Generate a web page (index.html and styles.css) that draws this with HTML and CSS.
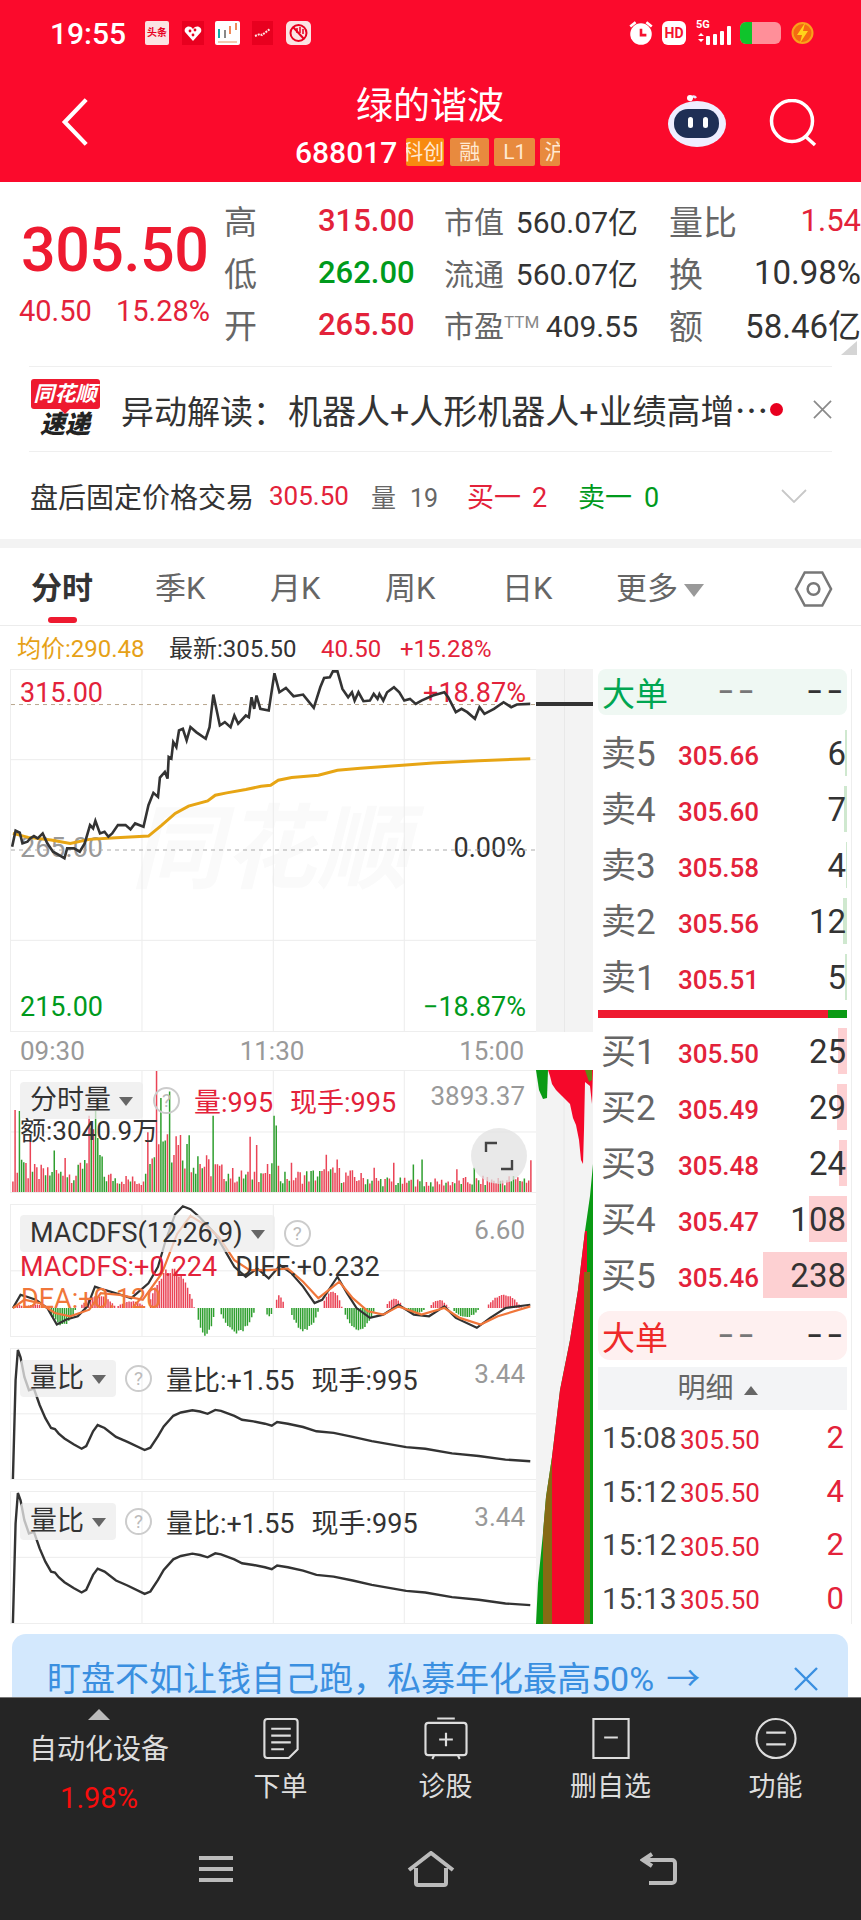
FILE: index.html
```html
<!DOCTYPE html>
<html lang="zh-CN">
<head>
    <meta charset="UTF-8">
    <meta name="viewport" content="width=device-width, initial-scale=1.0">
    <title>绿的谐波</title>
    <link rel="stylesheet" href="styles.css">
</head>
<body>
    <header class="topbar">
        <div class="status">
            <div class="status-left">
                <span class="clock">19:55</span>
                <span class="app app-news">头条</span>
                <svg class="app app-heart" viewBox="0 0 22 24"><rect width="22" height="24" fill="#e8001f"/><path d="M11 20 3 11C1 6 8 3 11 8c3-5 10-2 8 3z" fill="#fff"/><circle cx="8" cy="10" r="1.4" fill="#e8001f"/><circle cx="13" cy="9" r="1.4" fill="#e8001f"/><circle cx="11" cy="14" r="1.4" fill="#e8001f"/></svg>
                <svg class="app app-candle" viewBox="0 0 25 24"><rect width="25" height="24" rx="2" fill="#fff"/><rect x="3" y="8" width="2" height="9" fill="#13a8a8"/><rect x="9" y="9" width="2" height="8" fill="#888"/><rect x="14" y="5" width="2" height="8" fill="#f08a5a"/><rect x="20" y="2" width="2" height="7" fill="#f08a5a"/><rect x="3" y="20" width="19" height="2" fill="#f3c9b0"/></svg>
                <svg class="app app-trend" viewBox="0 0 21 24"><rect width="21" height="24" fill="#e8001f"/><path d="M3 15 8 13l2 1 4-3 4-3" fill="none" stroke="#ffe2e2" stroke-width="2" stroke-dasharray="2 1"/></svg>
                <svg class="app app-hand" viewBox="0 0 25 24"><rect width="25" height="24" rx="5" fill="#fbe3e3"/><circle cx="12.5" cy="12" r="8" fill="none" stroke="#e8001f" stroke-width="2"/><path d="M7 6l11 12" stroke="#e8001f" stroke-width="2"/><path d="M11 7v5M14 6v6M17 8v5" stroke="#e8001f" stroke-width="1.5"/></svg>
            </div>
            <div class="status-right">
                <svg class="ico-alarm" viewBox="0 0 26 24"><circle cx="13" cy="13" r="10" fill="#fff"/><path d="M3 6l5-4M23 6l-5-4" stroke="#fff" stroke-width="2.4" fill="none"/><path d="M13 8v6h5" stroke="#f5112f" stroke-width="2.4" fill="none"/></svg>
                <span class="ico-hd">HD</span>
                <div class="signal">
                    <span class="signal-5g">5G</span>
                    <svg viewBox="0 0 37 24"><path d="M3 15l3-3 3 3zM3 18l3 3 3-3z" fill="#fff"/><rect x="11" y="15" width="4" height="9" rx="1" fill="#fff"/><rect x="18" y="13" width="4" height="11" rx="1" fill="#fff"/><rect x="25" y="10" width="4" height="14" rx="1" fill="#fff"/><rect x="32" y="5" width="4" height="19" rx="1" fill="#fff"/></svg>
                </div>
                <div class="battery"><span class="battery-fill"></span></div>
                <svg class="ico-bolt" viewBox="0 0 25 26"><circle cx="12.5" cy="13" r="10" fill="#f46a12" stroke="#f9a11b" stroke-width="2"/><path d="M15 3 7 15h5l-2 8 8-12h-5z" fill="#ffd31a"/></svg>
            </div>
        </div>
        <div class="nav">
            <svg class="nav-back" viewBox="0 0 30 52"><polyline points="27,2 4,26 27,50" fill="none" stroke="#fff" stroke-width="4.5"/></svg>
            <div class="nav-title">
                <h1>绿的谐波</h1>
                <div class="nav-code">
                    <span class="code">688017</span>
                    <span class="tag tag-kc"><span>科创</span></span>
                    <span class="tag">融</span>
                    <span class="tag">L1</span>
                    <span class="tag tag-cut"><span>沪</span></span>
                </div>
            </div>
            <div class="nav-tools">
                <svg class="robot" viewBox="0 0 60 54"><path d="M24 7c-2-4 3-6 5-3" fill="none" stroke="#e9e7ff" stroke-width="2.5"/><circle cx="23" cy="4" r="3" fill="#fff"/><ellipse cx="30" cy="30" rx="29" ry="23" fill="#efeeff"/><rect x="7" y="15" width="45" height="29" rx="14" fill="#1f2f55"/><rect x="21" y="23" width="5" height="11" rx="2.5" fill="#fff"/><rect x="36" y="23" width="5" height="11" rx="2.5" fill="#fff"/></svg>
                <svg class="search" viewBox="0 0 48 48"><circle cx="23" cy="22" r="20.5" fill="none" stroke="#fff" stroke-width="3.5"/><path d="M36 37l10 9" stroke="#fff" stroke-width="3.5"/></svg>
            </div>
        </div>
    </header>

    <section class="quote">
        <div class="quote-main">
            <div class="price">305.50</div>
            <div class="price-sub"><span>40.50</span><span>15.28%</span></div>
        </div>
        <div class="quote-grid">
            <span class="qk">高</span><span class="qv red">315.00</span>
            <span class="qm"><em>市值</em><b>560.07亿</b></span>
            <span class="qk qk2">量比</span><span class="qr qr-small red">1.54</span>

            <span class="qk">低</span><span class="qv green">262.00</span>
            <span class="qm"><em>流通</em><b>560.07亿</b></span>
            <span class="qk qk2">换</span><span class="qr">10.98%</span>

            <span class="qk">开</span><span class="qv red">265.50</span>
            <span class="qm"><em>市盈<small>TTM</small></em><b>409.55</b></span>
            <span class="qk qk2">额</span><span class="qr">58.46亿</span>
        </div>
        <span class="corner"></span>
    </section>

    <section class="notice">
        <div class="logo">
            <span class="logo-top">同花顺</span>
            <span class="logo-bottom">速递</span>
        </div>
        <p class="notice-text">异动解读：<span class="notice-gap">机器人+人形机器人+业绩高增<span class="dots">…</span></span></p>
        <span class="notice-dot"></span>
        <svg class="notice-close" viewBox="0 0 20 20"><path d="M1 1l18 18M19 1 1 19" stroke="#8a8a8a" stroke-width="1.8"/></svg>
    </section>

    <section class="aftermarket">
        <span class="am-title">盘后固定价格交易</span>
        <span class="am-price red">305.50</span>
        <span class="am-vol">量<i>19</i></span>
        <span class="am-buy red">买一<i>2</i></span>
        <span class="am-sell green">卖一<i>0</i></span>
        <svg class="am-arrow" viewBox="0 0 26 14"><polyline points="1,1 13,13 25,1" fill="none" stroke="#c8c8c8" stroke-width="1.8"/></svg>
    </section>

    <nav class="tabs">
        <span class="tab tab-active">分时</span>
        <span class="tab">季K</span>
        <span class="tab">月K</span>
        <span class="tab">周K</span>
        <span class="tab">日K</span>
        <span class="tab">更多<i class="tri tri-tab"></i></span>
        <svg class="tab-hex" viewBox="0 0 40 38"><path d="M11 2h18l9 17-9 17H11L2 19z" fill="none" stroke="#777" stroke-width="2.6"/><circle cx="20" cy="19" r="6" fill="none" stroke="#777" stroke-width="2.6"/></svg>
    </nav>

    <div class="legend">
        <span class="legend-avg">均价:290.48</span>
        <span class="legend-last">最新:305.50</span>
        <span class="red legend-chg">40.50</span>
        <span class="red">+15.28%</span>
    </div>

    <main class="main">
        <div class="charts">
            <div class="price-row">
                <div class="panel panel-price">
                    <span class="watermark">同花顺</span>
                    <span class="pl pl-top red">315.00</span>
                    <span class="pl pl-top pl-right red">+18.87%</span>
                    <span class="pl pl-mid gray">265.00</span>
                    <span class="pl pl-mid pl-right dark">0.00%</span>
                    <span class="pl pl-bot green">215.00</span>
                    <span class="pl pl-bot pl-right green">−18.87%</span>
                    <svg class="plot" viewBox="25 358 1375 1087" preserveAspectRatio="none">
                        <path class="grid" d="M368 358V1445M712 358V1445M1055 358V1445M25 628H1400M25 1172H1400"/>
                        <path class="grid-dash" d="M25 462H1400"/>
                        <path class="grid-dash2" d="M25 900H1400"/>
                        <path id="avgLine" class="line-avg"/>
                        <path id="priceLine" class="line-price"/>
                    </svg>
                </div>
                <div class="stripe"><span class="stripe-tick"></span></div>
            </div>
            <div class="times"><span>09:30</span><span>11:30</span><span>15:00</span></div>
            <div class="lower">
                <div class="panels">
                    <div class="panel panel-vol">
                        <svg class="plot" viewBox="25 30 1375 373" preserveAspectRatio="none">
                            <path class="grid" d="M368 30V403M712 30V403M1055 30V403M25 218H1400"/>
                            <path id="volRed" class="bar-red"/>
                            <path id="volGreen" class="bar-green"/>
                        </svg>
                        <div class="head">
                            <span class="chip">分时量<i class="tri"></i></span>
                            <span class="help">?</span>
                            <span class="red vals">量:995</span>
                            <span class="red vals">现手:995</span>
                        </div>
                        <span class="amount">额:3040.9万</span>
                        <span class="maxval">3893.37</span>
                        <span class="expand">
                            <svg viewBox="0 0 30 30"><path d="M2 11V2h11M28 19v9H17" fill="none" stroke="#444" stroke-width="2.4"/></svg>
                        </span>
                    </div>
                    <div class="panel panel-macd">
                        <svg class="plot" viewBox="25 432 1375 398" preserveAspectRatio="none">
                            <path class="grid" d="M368 432V830M712 432V830M1055 432V830M25 632H1400"/>
                            <path id="macdRed" class="bar-red"/>
                            <path id="macdGreen" class="bar-green"/>
                            <path id="macdDif" class="line-dif"/>
                            <path id="macdDea" class="line-dea"/>
                        </svg>
                        <div class="head">
                            <span class="chip">MACDFS(12,26,9)<i class="tri"></i></span>
                            <span class="help">?</span>
                        </div>
                        <span class="maxval">6.60</span>
                        <div class="macd-vals">
                            <span class="red">MACDFS:+0.224</span>
                            <span class="dark">DIFF:+0.232</span>
                        </div>
                        <span class="macd-dea">DEA:+0.120</span>
                    </div>
                    <div class="panel panel-ratio">
                        <svg class="plot" viewBox="25 55 1375 395" preserveAspectRatio="none">
                            <path class="grid" d="M368 55V450M712 55V450M1055 55V450M25 252H1400"/>
                            <path class="line-ratio ratioLine"/>
                        </svg>
                        <div class="head">
                            <span class="chip">量比<i class="tri"></i></span>
                            <span class="help">?</span>
                            <span class="dark vals">量比:+1.55</span>
                            <span class="dark vals">现手:995</span>
                        </div>
                        <span class="maxval">3.44</span>
                    </div>
                    <div class="panel panel-ratio">
                        <svg class="plot" viewBox="25 55 1375 395" preserveAspectRatio="none">
                            <path class="grid" d="M368 55V450M712 55V450M1055 55V450M25 252H1400"/>
                            <path class="line-ratio ratioLine"/>
                        </svg>
                        <div class="head">
                            <span class="chip">量比<i class="tri"></i></span>
                            <span class="help">?</span>
                            <span class="dark vals">量比:+1.55</span>
                            <span class="dark vals">现手:995</span>
                        </div>
                        <span class="maxval">3.44</span>
                    </div>
                </div>
                <svg class="flow" viewBox="536 1070 57 554" preserveAspectRatio="none">
                    <path d="M564 1070V1624" stroke="#e8e8e8" stroke-width="1" fill="none"/>
                    <path d="M536 1070H548L547 1098 543 1099 539 1090z" fill="#0a9a14"/>
                    <path d="M548 1070H593L592 1104 590 1086 585 1082 584 1130 583 1164 581 1160 579 1140 576 1125 573 1118 570 1104 566 1100 562 1096 556 1090 552 1084 550 1076z" fill="#f5082a"/>
                    <path d="M585 1070H592V1080L589 1082 587 1076z" fill="#5f8a14"/>
                    <path d="M593 1164V1624H536L538 1583 543 1533 546 1497 552 1457 560 1390 570 1340 578 1290 582 1256 585 1231 590 1196z" fill="#0a9a14"/>
                    <path d="M587 1231V1624H552V1457L560 1390 570 1340 578 1290 582 1256 585 1231z" fill="#f5082a"/>
                    <path d="M584 1272V1624H590V1272z" fill="#866a14"/>
                    <path d="M552 1457V1624H543V1533L546 1497z" fill="#866a14"/>
                </svg>
            </div>
        </div>

        <aside class="book">
            <div class="big big-sell"><span class="big-name">大单</span><span class="dash dash-gray">−−</span><span class="dash">−−</span></div>
            <div class="rows">
                <div class="row"><span class="depth depth-sell" style="width: 2px"></span><span class="rk">卖5</span><span class="rp">305.66</span><span class="rq">6</span></div>
                <div class="row"><span class="depth depth-sell" style="width: 3px"></span><span class="rk">卖4</span><span class="rp">305.60</span><span class="rq">7</span></div>
                <div class="row"><span class="depth depth-sell" style="width: 1px"></span><span class="rk">卖3</span><span class="rp">305.58</span><span class="rq">4</span></div>
                <div class="row"><span class="depth depth-sell" style="width: 4px"></span><span class="rk">卖2</span><span class="rp">305.56</span><span class="rq">12</span></div>
                <div class="row"><span class="depth depth-sell" style="width: 2px"></span><span class="rk">卖1</span><span class="rp">305.51</span><span class="rq">5</span></div>
            </div>
            <div class="ratio-bar"><span class="ratio-sell"></span></div>
            <div class="rows">
                <div class="row"><span class="depth" style="width: 9px"></span><span class="rk">买1</span><span class="rp">305.50</span><span class="rq">25</span></div>
                <div class="row"><span class="depth" style="width: 10px"></span><span class="rk">买2</span><span class="rp">305.49</span><span class="rq">29</span></div>
                <div class="row"><span class="depth" style="width: 8px"></span><span class="rk">买3</span><span class="rp">305.48</span><span class="rq">24</span></div>
                <div class="row"><span class="depth" style="width: 38px"></span><span class="rk">买4</span><span class="rp">305.47</span><span class="rq">108</span></div>
                <div class="row"><span class="depth" style="width: 84px"></span><span class="rk">买5</span><span class="rp">305.46</span><span class="rq">238</span></div>
            </div>
            <div class="big big-buy"><span class="big-name">大单</span><span class="dash dash-gray">−−</span><span class="dash">−−</span></div>
            <div class="detail-head">明细<i class="tri tri-up"></i></div>
            <div class="ticks">
                <div class="tick"><span class="tt">15:08</span><span class="tp">305.50</span><span class="tq">2</span></div>
                <div class="tick"><span class="tt">15:12</span><span class="tp">305.50</span><span class="tq">4</span></div>
                <div class="tick"><span class="tt">15:12</span><span class="tp">305.50</span><span class="tq">2</span></div>
                <div class="tick"><span class="tt">15:13</span><span class="tp">305.50</span><span class="tq">0</span></div>
            </div>
        </aside>
    </main>

    <div class="banner">
        <p>盯盘不如让钱自己跑，私募年化最高50%<span class="banner-arrow">→</span></p>
        <svg class="banner-close" viewBox="0 0 24 24"><path d="M1 1l22 22M23 1 1 23" stroke="#3a8fe0" stroke-width="2.4"/></svg>
    </div>

    <footer class="bottombar">
        <div class="actions">
            <div class="sector">
                <i class="tri tri-up tri-sector"></i>
                <span class="sector-name">自动化设备</span>
                <span class="sector-pct">1.98%</span>
            </div>
            <div class="action">
                <svg viewBox="0 0 40 44"><path d="M6 2h28a3 3 0 0 1 3 3v28l-9 9H6a3 3 0 0 1-3-3V5a3 3 0 0 1 3-3z" class="ai"/><path d="M10 12h20M10 19h20M10 26h20M10 33h13" class="ai"/></svg>
                <span>下单</span>
            </div>
            <div class="action">
                <svg viewBox="0 0 48 44"><path d="M15 1.500h18M6 6h36a3 3 0 0 1 3 3v27a3 3 0 0 1-3 3H6a3 3 0 0 1-3-3V9a3 3 0 0 1 3-3zM12 39l-2 4M36 39l2 4M24 16v14M17 23h14" class="ai"/></svg>
                <span>诊股</span>
            </div>
            <div class="action">
                <svg viewBox="0 0 40 44"><path d="M2 2h36v40H2zM13 21h14" class="ai"/></svg>
                <span>删自选</span>
            </div>
            <div class="action">
                <svg viewBox="0 0 44 44"><circle cx="22" cy="22" r="20" class="ai"/><path d="M12 16h20M12 28h20" class="ai"/></svg>
                <span>功能</span>
            </div>
        </div>
        <div class="sysnav">
            <svg class="sys-menu" viewBox="0 0 36 30"><path d="M1 4h34M1 15h34M1 26h34" class="sys"/></svg>
            <svg class="sys-home" viewBox="0 0 48 36"><path d="M2 19 24 2l22 17M9 17v15a2 2 0 0 0 2 2h26a2 2 0 0 0 2-2V17" class="sys"/></svg>
            <svg class="sys-back" viewBox="0 0 38 34"><path d="M12 2 3 8l9 6M4 8h28a3 3 0 0 1 3 3v17a3 3 0 0 1-3 3H9" class="sys"/></svg>
        </div>
    </footer>

    <script src="charts.js"></script>
</body>
</html>
```

FILE: styles.css
```css
* {
    box-sizing: border-box;
}
body {
    font-family: Roboto, "Noto Sans CJK SC", sans-serif;
    background-color: #fff;
    color: #333;
    margin: 0;
    width: 861px;
    height: 1920px;
    overflow: hidden;
}
p, h1 {
    margin: 0;
    font-weight: normal;
}
i, em {
    font-style: normal;
}
.red { color: #e3223a; }
.green { color: #009a1c; }
.gray { color: #999; }
.dark { color: #333; }

/* top bar */
.topbar {
    background-color: #fb0a2c;
    height: 182px;
    color: #fff;
}
.status {
    height: 66px;
    padding: 0 46px 0 50px;
    display: flex;
    justify-content: space-between;
    align-items: center;
}
.status-left, .status-right {
    display: flex;
    align-items: center;
}
.clock {
    font-size: 30px;
    font-weight: 500;
    width: 95px;
}
.app {
    width: 24px;
    height: 24px;
    margin-right: 13px;
    display: block;
}
.app-news {
    background-color: #fbe3e3;
    color: #e8001f;
    font-size: 10px;
    font-weight: 700;
    line-height: 24px;
    text-align: center;
    border-radius: 2px;
    white-space: nowrap;
}
.app-heart { width: 22px; margin-right: 11px; }
.app-candle { width: 25px; margin-right: 12px; }
.app-trend { width: 21px; margin-right: 13px; }
.app-hand { width: 25px; margin-right: 0; }
.ico-alarm { width: 28px; height: 26px; margin-right: 7px; }
.ico-hd {
    background-color: #fff;
    color: #f5112f;
    font-size: 14px;
    font-weight: 700;
    width: 24px;
    height: 24px;
    line-height: 24px;
    text-align: center;
    border-radius: 6px;
    margin-right: 9px;
}
.signal {
    width: 37px;
    height: 26px;
    position: relative;
    margin-right: 8px;
}
.signal svg {
    width: 37px;
    height: 26px;
    display: block;
}
.signal-5g {
    position: absolute;
    left: 1px;
    top: -1px;
    font-size: 11px;
    font-weight: 700;
    line-height: 12px;
}
.battery {
    width: 41px;
    height: 22px;
    background-color: #ff8f99;
    border-radius: 6px;
    margin-right: 9px;
    overflow: hidden;
}
.battery-fill {
    display: block;
    width: 12px;
    height: 22px;
    background-color: #0fc42c;
}
.ico-bolt { width: 25px; height: 26px; }

.nav {
    height: 116px;
    padding: 31px 44px 0 61px;
    display: grid;
    grid-template-columns: 234px 270px 1fr;
    align-items: start;
}
.nav-back {
    width: 28px;
    height: 50px;
    display: block;
}
.nav-title {
    margin-top: -17px;
    text-align: center;
}
.nav-title h1 {
    font-size: 37px;
    line-height: 50px;
    margin-top: 2px;
}
.nav-code {
    display: flex;
    align-items: center;
    height: 40px;
}
.code {
    font-size: 30px;
    font-weight: 500;
    margin-right: 9px;
}
.tag {
    background-color: #e88a3e;
    color: #ffe9d2;
    font-size: 21px;
    height: 28px;
    line-height: 28px;
    padding: 0 9px;
    border-radius: 2px;
    margin-right: 5px;
    white-space: nowrap;
    overflow: hidden;
}
.tag-kc {
    background-color: #f88a10;
    width: 38px;
    padding: 0;
    margin-right: 6px;
    display: flex;
    justify-content: flex-end;
}
.tag-cut {
    width: 20px;
    padding: 0 0 0 4px;
    margin-right: 0;
}
.nav-tools {
    display: flex;
    align-items: flex-start;
    justify-content: flex-end;
}
.robot {
    width: 60px;
    height: 54px;
    margin: -3px 42px 0 0;
}
.search {
    width: 48px;
    height: 48px;
    margin-top: 2px;
}

/* quote */
.quote {
    height: 184px;
    padding: 12px 0 0 19px;
    display: flex;
    position: relative;
}
.quote-main {
    width: 205px;
    padding-top: 20px;
}
.price {
    color: #ee1a30;
    font-size: 61px;
    font-weight: 500;
    line-height: 72px;
    margin-left: 2px;
    letter-spacing: -0.5px;
}
.price-sub {
    color: #e3223a;
    font-size: 29px;
    line-height: 40px;
    display: flex;
    justify-content: space-between;
    margin-top: 5px;
    width: 191px;
}
.quote-grid {
    display: grid;
    grid-template-columns: 94px 126px 194px 31px 60px 132px;
    grid-auto-rows: 52px;
    align-items: center;
    white-space: nowrap;
}
.qk {
    font-size: 33px;
    color: #666;
}
.qk2 {
    grid-column: 5;
    font-size: 34px;
}
.qv {
    font-size: 31px;
    font-weight: 500;
}
.qm {
    grid-column: 3;
    display: flex;
    justify-content: space-between;
    align-items: baseline;
    font-size: 30px;
}
.qm em {
    color: #666;
}
.qm small {
    font-size: 17px;
    color: #888;
    vertical-align: 9px;
}
.qm b {
    font-weight: 400;
    color: #333;
}
.qr {
    grid-column: 6;
    text-align: right;
    font-size: 33px;
}
.qr-small {
    font-size: 31px;
}
.corner {
    position: absolute;
    right: 4px;
    bottom: 11px;
    width: 0;
    height: 0;
    border-left: 16px solid transparent;
    border-bottom: 14px solid #d5d5d5;
}

/* notice */
.notice {
    height: 86px;
    margin: 0 29px;
    border-top: 1px solid #efefef;
    border-bottom: 1px solid #efefef;
    display: flex;
    align-items: center;
    position: relative;
}
.logo {
    width: 70px;
    display: flex;
    flex-direction: column;
    align-items: center;
    margin-left: 1px;
}
.logo-top {
    background-color: #ee1a30;
    color: #fff;
    width: 69px;
    height: 30px;
    line-height: 30px;
    border-radius: 3px;
    font-size: 21px;
    font-style: italic;
    font-weight: 700;
    text-align: center;
    position: relative;
}
.logo-top:after {
    content: "";
    position: absolute;
    left: 28px;
    bottom: -5px;
    border-left: 6px solid transparent;
    border-right: 6px solid transparent;
    border-top: 6px solid #ee1a30;
}
.logo-bottom {
    font-size: 25px;
    font-style: italic;
    font-weight: 900;
    line-height: 28px;
    margin-top: 2px;
    color: #222;
}
.notice-text {
    margin-left: 21px;
    font-size: 33px;
    color: #333;
    white-space: nowrap;
    width: 649px;
}
.notice-gap {
    font-size: 34px;
    margin-left: 2px;
}
.dots {
    font-family: "Noto Sans CJK SC", sans-serif;
}
.notice-dot {
    width: 13px;
    height: 13px;
    background-color: #e8001f;
    border-radius: 50%;
}
.notice-close {
    position: absolute;
    right: 0;
    top: 33px;
    width: 19px;
    height: 19px;
}

/* after market row */
.aftermarket {
    height: 96px;
    padding-left: 30px;
    display: flex;
    align-items: center;
    white-space: nowrap;
    border-bottom: 9px solid #f3f3f3;
    position: relative;
}
.am-title { font-size: 28px; width: 239px; }
.am-price { font-size: 26px; width: 102px; }
.am-vol { font-size: 25px; color: #666; width: 96px; }
.am-vol i { margin-left: 14px; }
.am-buy { font-size: 27px; width: 111px; }
.am-buy i { margin-left: 11px; }
.am-sell { font-size: 27px; }
.am-sell i { margin-left: 12px; }
.am-arrow {
    position: absolute;
    left: 781px;
    top: 37px;
    width: 26px;
    height: 14px;
}

/* tabs */
.tabs {
    height: 78px;
    padding: 4px 0 0 31px;
    display: grid;
    grid-template-columns: 124px 115px 115px 117px 114px 178px auto;
    align-items: center;
    border-bottom: 1px solid #ececec;
    position: relative;
}
.tab {
    font-size: 31px;
    color: #666;
    line-height: 40px;
}
.tab-active {
    font-weight: 700;
    color: #333;
}
.tab-active:after {
    content: "";
    position: absolute;
    left: 48px;
    bottom: 2px;
    width: 29px;
    height: 6px;
    border-radius: 3px;
    background-color: #ee1a30;
}
.tab-hex {
    width: 39px;
    height: 38px;
}
.tri {
    display: inline-block;
    width: 0;
    height: 0;
    border-left: 7px solid transparent;
    border-right: 7px solid transparent;
    border-top: 9px solid #666;
    margin-left: 8px;
    vertical-align: middle;
}
.tri-tab {
    border-left-width: 10px;
    border-right-width: 10px;
    border-top: 13px solid #999;
    margin-left: 6px;
}

/* legend */
.legend {
    height: 41px;
    padding: 5px 0 0 17px;
    display: flex;
    font-size: 24px;
    line-height: 36px;
    white-space: nowrap;
}
.legend-avg { color: #e6a117; width: 152px; }
.legend-last { width: 152px; }
.legend-chg { width: 79px; }

/* main */
.main {
    padding: 2px 0 0 10px;
    display: flex;
    height: 957px;
}
.charts {
    width: 583px;
}
.price-row {
    display: flex;
    height: 363px;
}
.panel {
    position: relative;
    width: 526px;
    white-space: nowrap;
    border: 1px solid #eee;
    border-right: 0;
}
.plot {
    position: absolute;
    inset: 0;
    width: 100%;
    height: 100%;
    display: block;
}
.plot path {
    vector-effect: non-scaling-stroke;
    fill: none;
}
.grid { stroke: #ececec; stroke-width: 1px; }
.grid-dash { stroke: #b8a78e; stroke-width: 1px; stroke-dasharray: 4 4; }
.grid-dash2 { stroke: #aaa; stroke-width: 1px; stroke-dasharray: 4 4; }
.line-price { stroke: #333; stroke-width: 2.6px; }
.line-avg { stroke: #e7a514; stroke-width: 3px; }
.line-dif { stroke: #333; stroke-width: 2.2px; }
.line-dea { stroke: #f0763a; stroke-width: 2.2px; }
.line-ratio { stroke: #333; stroke-width: 2.4px; }
.bar-red { stroke: #ea4456; stroke-width: 1.5px; }
.bar-green { stroke: #2f9f2f; stroke-width: 1.5px; }

.watermark {
    position: absolute;
    left: 120px;
    top: 130px;
    font-size: 92px;
    font-weight: 700;
    font-style: italic;
    color: #fafafa;
    letter-spacing: 1px;
    line-height: 100px;
}
.pl {
    position: absolute;
    left: 9px;
    font-size: 27px;
    line-height: 30px;
}
.pl-right {
    left: auto;
    right: 10px;
}
.pl-top { top: 8px; }
.pl-mid { top: 163px; }
.pl-bot { top: 322px; }
.stripe {
    width: 57px;
    background-color: #f3f3f3;
    position: relative;
    background-image: linear-gradient(#e8e8e8, #e8e8e8);
    background-size: 1px 100%;
    background-repeat: no-repeat;
    background-position: 28px 0;
}
.stripe-tick {
    position: absolute;
    left: 0;
    right: 0;
    top: 33px;
    height: 4px;
    background-color: #333;
}
.times {
    width: 526px;
    height: 38px;
    padding: 0 12px 0 10px;
    display: flex;
    justify-content: space-between;
    align-items: center;
    color: #999;
    font-size: 26px;
}
.lower {
    display: flex;
}
.panels {
    width: 526px;
    display: flex;
    flex-direction: column;
    gap: 11px;
}
.panel-vol { height: 123px; }
.panel-macd { height: 133px; }
.panel-ratio { height: 132px; }
.panel-ratio:last-child { height: 133px; }
.flow {
    width: 57px;
    height: 554px;
    background-color: #f3f3f3;
    display: block;
}
.head {
    position: absolute;
    left: 9px;
    top: 10px;
    display: flex;
    align-items: center;
    font-size: 27px;
}
.chip {
    background-color: rgba(236, 236, 236, 0.75);
    border-radius: 4px;
    height: 37px;
    line-height: 37px;
    padding: 0 10px 0 10px;
    color: #333;
}
.help {
    width: 27px;
    height: 27px;
    border: 2px solid #ccc;
    border-radius: 50%;
    color: #bbb;
    font-size: 19px;
    line-height: 23px;
    text-align: center;
    margin: 0 14px 0 9px;
}
.vals {
    margin-right: 17px;
}
.panel-vol .help {
    margin-left: 10px;
}
.maxval {
    position: absolute;
    right: 11px;
    top: 7px;
    font-size: 26px;
    color: #999;
    line-height: 36px;
}
.amount {
    position: absolute;
    left: 9px;
    top: 43px;
    font-size: 26px;
    line-height: 34px;
    color: #333;
}
.expand {
    position: absolute;
    right: 9px;
    top: 57px;
    width: 56px;
    height: 56px;
    border-radius: 50%;
    background-color: rgba(225, 225, 225, 0.75);
    display: flex;
    align-items: center;
    justify-content: center;
}
.expand svg {
    width: 30px;
    height: 30px;
}
.macd-vals {
    position: absolute;
    left: 9px;
    top: 45px;
    display: flex;
    gap: 18px;
    font-size: 27px;
    line-height: 34px;
}
.macd-dea {
    position: absolute;
    left: 10px;
    top: 77px;
    font-size: 27px;
    line-height: 34px;
    color: #f0763a;
}

/* order book */
.book {
    width: 254px;
    margin-left: 5px;
    border-right: 1px solid #eee;
    height: 955px;
}
.big {
    height: 46px;
    display: flex;
    align-items: center;
    padding: 0 0 0 4px;
    width: 249px;
    border-radius: 8px;
    white-space: nowrap;
}
.big-sell { background-color: #eff8f3; }
.big-buy {
    background-color: #fef0f0;
    height: 49px;
    margin-top: 8px;
    border-radius: 12px;
}
.big-name {
    font-size: 33px;
    width: 116px;
}
.big-sell .big-name { color: #00a651; }
.big-buy .big-name { color: #ee2a2a; }
.dash {
    font-size: 29px;
    font-weight: 500;
    letter-spacing: 4px;
    width: 89px;
    color: #333;
}
.dash:last-child {
    width: auto;
}
.dash-gray { color: #777; }
.rows {
    margin-top: 10px;
}
.rows + .ratio-bar + .rows {
    margin-top: 5px;
}
.row {
    height: 56px;
    position: relative;
    display: flex;
    align-items: center;
    width: 249px;
    padding-left: 3px;
}
.depth {
    position: absolute;
    right: 0;
    top: 5px;
    height: 46px;
    background-color: #fdd0d2;
}
.depth-sell {
    background-color: #cfe8cf;
}
.rk {
    font-size: 35px;
    color: #666;
    width: 77px;
    position: relative;
    top: -3px;
    white-space: nowrap;
}
.rp {
    font-size: 26px;
    font-weight: 500;
    color: #e3223a;
    position: relative;
    top: 3px;
}
.rq {
    font-size: 33px;
    margin-left: auto;
    margin-right: 1px;
    position: relative;
}
.ratio-bar {
    width: 249px;
    height: 8px;
    margin-top: 5px;
    background-color: #0a9a14;
}
.ratio-sell {
    display: block;
    width: 230px;
    height: 8px;
    background-color: #ee1a30;
}
.detail-head {
    width: 249px;
    height: 43px;
    margin-top: 7px;
    background-color: #f3f4f6;
    color: #666;
    font-size: 28px;
    line-height: 43px;
    text-align: center;
    padding-right: 10px;
}
.tri-up {
    border-top: 0;
    border-bottom: 9px solid #666;
    margin-left: 10px;
}
.ticks {
    padding-top: 1px;
}
.tick {
    height: 53.500px;
    width: 249px;
    display: flex;
    align-items: center;
    padding-left: 4px;
    color: #e3223a;
}
.tt {
    font-size: 30px;
    color: #444;
    width: 78px;
}
.tp {
    font-size: 26px;
    position: relative;
    top: 2px;
}
.tq {
    font-size: 31px;
    margin-left: auto;
    margin-right: 3px;
}

/* banner */
.banner {
    height: 63px;
    margin: 10px 13px 0 12px;
    padding: 23px 30px 0 35px;
    background-color: #d3e8fd;
    border-radius: 14px 14px 0 0;
    color: #3a8fe0;
    display: flex;
    justify-content: space-between;
    font-size: 34px;
    line-height: 44px;
    white-space: nowrap;
    overflow: hidden;
}
.banner-arrow {
    margin-left: 12px;
}
.banner-close {
    width: 24px;
    height: 24px;
    margin-top: 10px;
}

/* bottom */
.bottombar {
    height: 223px;
    background-color: #252525;
    border-top: 1px solid #777;
    color: #ddd;
}
.actions {
    height: 153px;
    display: flex;
}
.sector {
    width: 198px;
    display: flex;
    flex-direction: column;
    align-items: center;
    padding-top: 11px;
}
.tri-sector {
    border-left-width: 11px;
    border-right-width: 11px;
    border-bottom: 11px solid #bbb;
    margin: 0;
}
.sector-name {
    font-size: 28px;
    line-height: 40px;
    margin-top: 10px;
}
.sector-pct {
    font-size: 29px;
    line-height: 40px;
    color: #f80d0d;
    margin-top: 8px;
}
.action {
    width: 165px;
    display: flex;
    flex-direction: column;
    align-items: center;
    padding-top: 19px;
    font-size: 27px;
}
.action svg {
    height: 43px;
    width: 48px;
    display: block;
    margin-bottom: 5px;
}
.ai {
    fill: none;
    stroke: #ddd;
    stroke-width: 2.2;
}
.sysnav {
    display: flex;
    align-items: center;
    padding-left: 198px;
    height: 36px;
}
.sys {
    fill: none;
    stroke: #bbb;
    stroke-width: 4;
}
.sys-menu { width: 36px; height: 30px; }
.sys-home { width: 48px; height: 36px; margin-left: 173px; }
.sys-back { width: 38px; height: 34px; margin-left: 185px; }
```

FILE: charts.js
```js
// coordinates are in each chart's own viewBox units
function toPath(pts) {
    let d = '';
    for (let i = 0; i < pts.length; i += 2) {
        d += (i === 0 ? 'M' : 'L') + pts[i] + ' ' + pts[i + 1];
    }
    return d;
}

function noise(i) {
    const s = Math.sin(i * 12.9898) * 43758.5453;
    return s - Math.floor(s);
}

function lerp(table, x) {
    for (let i = 1; i < table.length; i++) {
        if (x <= table[i][0]) {
            const a = table[i - 1], b = table[i];
            return a[1] + (b[1] - a[1]) * (x - a[0]) / (b[0] - a[0]);
        }
    }
    return table[table.length - 1][1];
}

const pricePts = [28,890,37,842,48,848,55,880,68,875,75,865,85,858,95,865,108,850,120,880,135,905,150,915,165,925,172,895,190,895,205,905,218,880,232,825,240,835,246,812,258,850,270,845,280,860,290,850,305,825,325,825,338,838,350,820,372,830,385,765,398,728,410,740,415,682,428,665,435,685,438,620,445,625,450,575,458,590,465,540,475,535,485,570,495,530,510,545,535,565,545,530,555,432,572,525,585,515,600,530,610,495,620,520,640,495,648,500,655,440,662,475,668,435,678,475,700,480,715,368,728,425,745,412,765,437,790,432,818,472,835,410,845,382,860,380,868,362,880,362,893,415,908,440,918,425,925,450,935,425,948,452,965,450,975,430,985,445,990,430,1000,450,1010,425,1028,410,1042,425,1055,450,1070,445,1085,460,1100,450,1130,435,1160,425,1170,440,1190,485,1205,475,1220,485,1240,505,1252,470,1265,490,1290,475,1315,455,1335,470,1350,462,1385,460];
const avgPts = [30,850,70,862,130,870,180,880,230,868,300,863,385,858,420,825,455,790,490,768,540,752,560,735,590,728,640,718,680,708,705,705,725,690,760,682,830,675,880,660,940,654,1050,645,1130,638,1250,631,1385,625];
const difPts = [30,745,50,705,65,710,90,720,120,745,145,795,170,780,200,770,225,740,245,680,270,690,300,700,340,715,385,670,410,620,430,540,455,460,475,436,495,445,520,470,560,520,585,570,610,620,640,650,670,625,700,655,730,615,760,640,790,680,820,730,840,720,880,650,905,700,930,745,965,775,1000,765,1040,735,1080,765,1120,770,1160,740,1190,775,1245,805,1280,775,1320,745,1385,735];
const deaPts = [30,745,60,720,100,730,140,760,180,770,230,750,260,700,310,705,370,720,420,640,460,520,495,465,530,490,570,530,610,600,650,630,700,630,750,625,790,665,830,715,885,665,920,715,960,755,1000,765,1040,740,1100,765,1160,745,1200,775,1255,795,1300,770,1385,740];
const ratioPts = [30,450,37,150,43,58,50,80,60,140,72,180,85,175,100,225,115,265,130,295,140,298,150,312,165,327,190,345,210,358,222,350,240,305,252,286,270,295,300,322,330,337,375,362,390,355,410,320,425,290,450,258,470,248,500,241,520,245,540,252,560,240,575,243,610,258,630,270,660,275,690,282,708,288,722,277,750,282,790,292,825,305,870,310,920,322,970,335,1060,353,1110,358,1180,372,1250,380,1320,391,1385,396];

document.getElementById('priceLine').setAttribute('d', toPath(pricePts));
document.getElementById('avgLine').setAttribute('d', toPath(avgPts));
document.getElementById('macdDif').setAttribute('d', toPath(difPts));
document.getElementById('macdDea').setAttribute('d', toPath(deaPts));
document.querySelectorAll('.ratioLine').forEach(function(el) {
    el.setAttribute('d', toPath(ratioPts));
});

// volume bars
const STEP = 5.7;
const volEnv = [[30,80],[48,165],[70,80],[120,70],[200,70],[225,165],[250,185],[270,60],[370,40],[385,200],[410,255],[470,190],[500,125],[560,90],[620,60],[700,80],[760,60],[880,70],[980,45],[1100,35],[1385,50]];
const volSpikes = {37:253,48:250,78:175,138:128,168:105,232:235,245:250,405:373,418:290,440:310,465:145,490:175,515:110,552:235,575:85,654:170,668:145,712:235,718:205,760:90,850:115,880:100,975:75,1025:90,1080:85,1100:100,1190:70,1240:75,1385:98};
let volRed = '', volGreen = '';
const spikeAt = {};
Object.keys(volSpikes).forEach(function(x) {
    spikeAt[Math.round((x - 30) / STEP)] = volSpikes[x];
});
for (let i = 0; 30 + i * STEP <= 1390; i++) {
    const x = 30 + i * STEP;
    const h = spikeAt[i] || lerp(volEnv, x) * (0.4 + 0.75 * noise(i));
    const seg = 'M' + x + ' 403V' + (403 - h);
    if (noise(i + 500) > 0.4) {
        volRed += seg;
    } else {
        volGreen += seg;
    }
}
document.getElementById('volRed').setAttribute('d', volRed);
document.getElementById('volGreen').setAttribute('d', volGreen);

// macd histogram, [from, to, height] with negative height for green
const macdParts = [[30,60,10],[60,120,12],[125,195,-55],[205,300,40],[300,380,22],[385,505,125],[510,560,-85],[570,665,-80],[690,712,-28],[715,742,40],[755,832,-72],[840,892,55],[895,978,-70],[1005,1052,30],[1055,1112,-18],[1120,1172,26],[1180,1252,-30],[1270,1362,42]];
const ZERO = 745;
let macdRed = '', macdGreen = '';
macdParts.forEach(function(part) {
    for (let x = part[0]; x <= part[1]; x += STEP) {
        const t = (x - part[0]) / (part[1] - part[0]);
        const h = part[2] * Math.pow(Math.sin(Math.PI * t), 0.8) * (0.85 + 0.15 * noise(x));
        const seg = 'M' + x + ' ' + ZERO + 'V' + (ZERO - h);
        if (h > 0) {
            macdRed += seg;
        } else {
            macdGreen += seg;
        }
    }
});
document.getElementById('macdRed').setAttribute('d', macdRed);
document.getElementById('macdGreen').setAttribute('d', macdGreen);
```
